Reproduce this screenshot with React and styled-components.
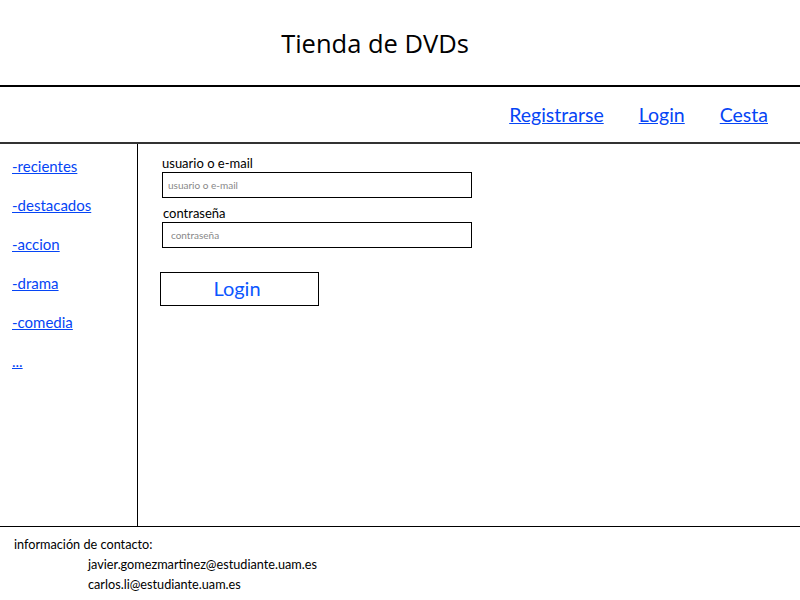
import React from "react";
import styled, { createGlobalStyle } from "styled-components";

const Global = createGlobalStyle`
  html, body { margin: 0; padding: 0; background: #fff; }
  body { font-family: Lato, "Open Sans", sans-serif; color: #000; }
  * { box-sizing: border-box; }
`;

const Page = styled.div`
  width: 800px;
  height: 600px;
  display: flex;
  flex-direction: column;
  overflow: hidden;
`;

const Header = styled.header`
  height: 87px;
  border-bottom: 2px solid #000;
  display: flex;
  align-items: flex-start;
  justify-content: center;
  padding: 26px 50px 0 0;
`;

const Title = styled.h1`
  margin: 0;
  font-family: "Open Sans", sans-serif;
  font-weight: 400;
  font-size: 25.5px;
  line-height: 34px;
`;

const Nav = styled.nav`
  height: 57px;
  border-bottom: 2px solid #333;
  display: flex;
  justify-content: flex-end;
  align-items: flex-start;
  gap: 35px;
  padding: 16px 32px 0 0;
`;

const Link = styled.a`
  color: ${(p) => p.$color || "#0645f5"};
  text-decoration: underline;
  font-family: Lato, sans-serif;
  font-size: ${(p) => p.$size || 15}px;
  cursor: pointer;
`;

const Main = styled.div`
  flex: 1;
  display: flex;
  border-bottom: 1px solid #000;
`;

const Sidebar = styled.aside`
  width: 138px;
  border-right: 1px solid #000;
  display: flex;
  flex-direction: column;
  gap: 18px;
  padding: 12px 0 0 12px;
`;

const SideLink = styled(Link)`
  line-height: 21px;
`;

const Content = styled.section`
  flex: 1;
  padding: 11px 0 0 24px;
  display: flex;
  flex-direction: column;
  align-items: flex-start;
`;

const Label = styled.label`
  font-family: Lato, sans-serif;
  font-size: 13px;
  line-height: 16px;
  margin-left: ${(p) => p.$indent || 0}px;
`;

const Input = styled.input`
  width: 310px;
  height: 26px;
  border: 1.5px solid #000;
  margin: 1px 0 7px;
  padding: 0 0 0 ${(p) => p.$pad || 5}px;
  font-family: Lato, sans-serif;
  font-size: 10px;
  outline: none;
  &::placeholder { color: #888; }
`;

const Button = styled.button`
  margin: 17px 0 0 -2px;
  width: 159px;
  height: 34px;
  border: 1.5px solid #000;
  background: #fff;
  color: #0b57ff;
  font-family: Lato, sans-serif;
  font-size: 20px;
  padding: 0 5px 3px 0;
  cursor: pointer;
`;

const Footer = styled.footer`
  height: 73px;
  padding: 7px 0 0 14px;
  display: flex;
  flex-direction: column;
  font-family: Lato, sans-serif;
  font-size: 12.7px;
  line-height: 20px;
`;

const Email = styled.div`
  padding-left: 74px;
`;

const sideItems = ["-recientes", "-destacados", "-accion", "-drama", "-comedia", "..."];

export default function App() {
  return (
    <>
      <Global />
      <Page>
        <Header>
          <Title>Tienda de DVDs</Title>
        </Header>
        <Nav>
          <Link $size={19.5}>Registrarse</Link>
          <Link $size={19.5}>Login</Link>
          <Link $size={19.5}>Cesta</Link>
        </Nav>
        <Main>
          <Sidebar>
            {sideItems.map((s) => (
              <SideLink key={s}>{s}</SideLink>
            ))}
          </Sidebar>
          <Content>
            <Label>usuario o e-mail</Label>
            <Input placeholder="usuario o e-mail" />
            <Label $indent={1}>contraseña</Label>
            <Input type="password" placeholder="contraseña" $pad={8} />
            <Button>Login</Button>
          </Content>
        </Main>
        <Footer>
          <div>información de contacto:</div>
          <Email>javier.gomezmartinez@estudiante.uam.es</Email>
          <Email>carlos.li@estudiante.uam.es</Email>
        </Footer>
      </Page>
    </>
  );
}
